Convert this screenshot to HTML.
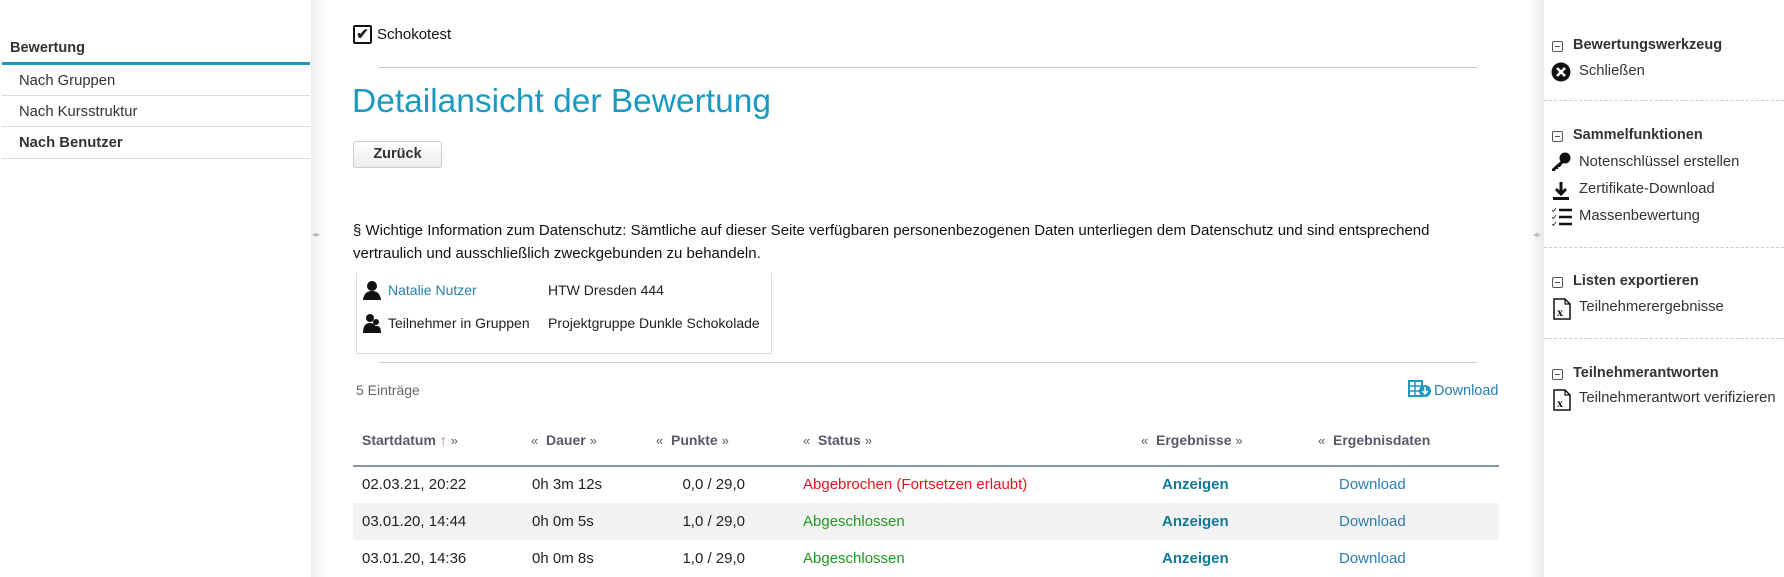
<!DOCTYPE html>
<html><head><meta charset="utf-8"><style>
*{margin:0;padding:0;box-sizing:border-box}
body{width:1784px;height:577px;background:#fff;font-family:"Liberation Sans",Arial,sans-serif;color:#222;position:relative;overflow:hidden;font-size:14px}
.a{position:absolute;white-space:nowrap}
.shl{position:absolute;left:311px;top:0;width:16px;height:577px;background:linear-gradient(to right,#eee,#f7f7f7,#fff)}
.shr{position:absolute;left:1530px;top:0;width:14px;height:577px;background:linear-gradient(to right,#fff,#f3f3f3,#e8e8e8)}
.sep{position:absolute;height:1px;background:#ddd}
.dash{position:absolute;left:1544px;width:240px;border-top:1px dashed #ccc}
.rh{font-weight:bold;color:#333;font-size:14.5px}
.ri{font-size:14.8px;color:#333}
.mini{display:inline-block;width:11px;height:11px;border:1px solid #555;border-radius:2px;position:relative}
.mini:after{content:"";position:absolute;left:2px;right:2px;top:4px;height:1px;background:#555}
.hd{color:#555a66;font-weight:bold;font-size:14px}
.q{color:#555a66;font-weight:normal;font-size:13px}
.t{font-size:15px}
</style></head><body>
<div class="a" style="left:10px;top:40px;font-weight:bold;font-size:14.5px;color:#333">Bewertung</div>
<div class="a" style="left:2px;top:62px;width:308px;height:3px;background:#1a9ac0"></div>
<div class="a" style="left:19px;top:73px;font-size:14.8px;color:#333">Nach Gruppen</div>
<div class="sep" style="left:2px;top:95px;width:308px"></div>
<div class="a" style="left:19px;top:104px;font-size:14.8px;color:#333">Nach Kursstruktur</div>
<div class="sep" style="left:2px;top:126px;width:308px"></div>
<div class="a" style="left:19px;top:135px;font-size:14.8px;font-weight:bold;color:#333">Nach Benutzer</div>
<div class="sep" style="left:2px;top:158px;width:308px"></div>
<div class="shl"></div>
<div class="a" style="left:312px;top:230px;font-size:8px;color:#bbb">◂▸</div>
<div class="shr"></div>
<div class="a" style="left:1533px;top:230px;font-size:8px;color:#bbb">◂▸</div>

<div class="a" style="left:353px;top:25px;width:19px;height:19px;border:2px solid #111;border-radius:2px;font-size:15px;line-height:15px;text-align:center;font-weight:bold">✔</div>
<div class="a" style="left:377px;top:26px;font-size:15px;color:#111">Schokotest</div>
<div class="sep" style="left:379px;top:67px;width:1098px;background:#ccc"></div>
<div class="a" style="left:352px;top:83px;font-size:33.5px;color:#1a9ac0">Detailansicht der Bewertung</div>
<div class="a" style="left:353px;top:141px;width:89px;height:27px;border:1px solid #ccc;border-radius:3px;background:linear-gradient(#fff,#ececec);font-weight:bold;font-size:14.5px;color:#333;text-align:center;line-height:25px">Zurück</div>
<div class="a" style="left:353px;top:219px;font-size:15px;color:#111;line-height:23px">§ Wichtige Information zum Datenschutz: Sämtliche auf dieser Seite verfügbaren personenbezogenen Daten unterliegen dem Datenschutz und sind entsprechend<br>vertraulich und ausschließlich zweckgebunden zu behandeln.</div>
<div class="a" style="left:356px;top:273px;width:416px;height:81px;border:1px solid #ddd;border-top:none"></div>
<svg class="a" style="left:362px;top:280px" width="20" height="20" viewBox="0 0 20 20"><circle cx="10" cy="6" r="5" fill="#111"/><path d="M1 20 Q2 11 10 11 Q18 11 19 20Z" fill="#111"/></svg>
<div class="a" style="left:388px;top:282px;font-size:14px;color:#2a7fb0">Natalie Nutzer</div>
<div class="a" style="left:548px;top:282px;font-size:14px">HTW Dresden 444</div>
<svg class="a" style="left:362px;top:313px" width="20" height="20" viewBox="0 0 20 20"><circle cx="8" cy="5" r="4" fill="#111"/><path d="M1 20 Q1 10 8 10 Q15 10 15 20Z" fill="#111"/><circle cx="14" cy="9" r="3" fill="#111"/><path d="M11 20 Q11 13 15 13 Q19 13 19 20Z" fill="#111"/></svg>
<div class="a" style="left:388px;top:315px;font-size:14px">Teilnehmer in Gruppen</div>
<div class="a" style="left:548px;top:315px;font-size:14px">Projektgruppe Dunkle Schokolade</div>
<div class="sep" style="left:379px;top:362px;width:1098px;background:#ccc"></div>
<div class="a" style="left:356px;top:382px;font-size:14px;color:#666">5 Einträge</div>
<svg class="a" style="left:1408px;top:380px" width="24" height="18" viewBox="0 0 24 18"><rect x="1" y="1" width="13" height="15" fill="none" stroke="#1a9ac0" stroke-width="2"/><path d="M1 6h13M1 11h13M7 1v15" stroke="#1a9ac0" stroke-width="1.5"/><circle cx="17" cy="11" r="6" fill="#1a9ac0"/><path d="M17 7v6M14.5 11l2.5 3 2.5-3" stroke="#fff" stroke-width="1.5" fill="none"/></svg>
<div class="a" style="left:1434px;top:383px;font-size:14.5px;color:#2a7fb0">Download</div>

<div class="a hd" style="left:362px;top:432px">Startdatum <span style="color:#c06080;font-weight:normal">↑</span> <span class="q">»</span></div>
<div class="a hd" style="left:531px;top:432px"><span class="q">«</span>&nbsp; Dauer <span class="q">»</span></div>
<div class="a hd" style="left:656px;top:432px"><span class="q">«</span>&nbsp; Punkte <span class="q">»</span></div>
<div class="a hd" style="left:803px;top:432px"><span class="q">«</span>&nbsp; Status <span class="q">»</span></div>
<div class="a hd" style="left:1141px;top:432px"><span class="q">«</span>&nbsp; Ergebnisse <span class="q">»</span></div>
<div class="a hd" style="left:1318px;top:432px"><span class="q">«</span>&nbsp; Ergebnisdaten</div>
<div class="a" style="left:353px;top:465px;width:1146px;height:2px;background:#8a92a6"></div>
<div class="a" style="left:353px;top:503px;width:1146px;height:37px;background:#f2f2f2"></div>

<div class="a t" style="left:362px;top:476px">02.03.21, 20:22</div>
<div class="a t" style="left:532px;top:476px">0h 3m 12s</div>
<div class="a t" style="left:665px;top:476px;width:80px;text-align:right">0,0 / 29,0</div>
<div class="a t" style="left:803px;top:476px;color:#e8141e">Abgebrochen (Fortsetzen erlaubt)</div>
<div class="a t" style="left:1162px;top:476px;color:#0f7a97;font-weight:bold">Anzeigen</div>
<div class="a t" style="left:1339px;top:476px;color:#2a7fb0">Download</div>

<div class="a t" style="left:362px;top:513px">03.01.20, 14:44</div>
<div class="a t" style="left:532px;top:513px">0h 0m 5s</div>
<div class="a t" style="left:665px;top:513px;width:80px;text-align:right">1,0 / 29,0</div>
<div class="a t" style="left:803px;top:513px;color:#1a9e1a">Abgeschlossen</div>
<div class="a t" style="left:1162px;top:513px;color:#0f7a97;font-weight:bold">Anzeigen</div>
<div class="a t" style="left:1339px;top:513px;color:#2a7fb0">Download</div>

<div class="a t" style="left:362px;top:550px">03.01.20, 14:36</div>
<div class="a t" style="left:532px;top:550px">0h 0m 8s</div>
<div class="a t" style="left:665px;top:550px;width:80px;text-align:right">1,0 / 29,0</div>
<div class="a t" style="left:803px;top:550px;color:#1a9e1a">Abgeschlossen</div>
<div class="a t" style="left:1162px;top:550px;color:#0f7a97;font-weight:bold">Anzeigen</div>
<div class="a t" style="left:1339px;top:550px;color:#2a7fb0">Download</div>

<div class="a" style="left:1552px;top:39px"><span class="mini"></span></div>
<div class="a rh" style="left:1573px;top:37px">Bewertungswerkzeug</div>
<svg class="a" style="left:1551px;top:62px" width="20" height="20" viewBox="0 0 20 20"><circle cx="10" cy="10" r="9.5" fill="#111"/><path d="M6 6l8 8M14 6l-8 8" stroke="#fff" stroke-width="2.6"/></svg>
<div class="a ri" style="left:1579px;top:63px">Schließen</div>
<div class="dash" style="top:100px"></div>
<div class="a" style="left:1552px;top:129px"><span class="mini"></span></div>
<div class="a rh" style="left:1573px;top:127px">Sammelfunktionen</div>
<svg class="a" style="left:1551px;top:152px" width="20" height="20" viewBox="0 0 20 20"><circle cx="14" cy="6" r="5.5" fill="#111"/><path d="M11 8L1 17v2h3l1-2h2v-2h2l3-4z" fill="#111"/></svg>
<div class="a ri" style="left:1579px;top:154px">Notenschlüssel erstellen</div>
<svg class="a" style="left:1552px;top:181px" width="18" height="20" viewBox="0 0 18 20"><path d="M9 1v11M4 8l5 5 5-5" stroke="#111" stroke-width="3" fill="none"/><rect x="1" y="16" width="16" height="3" fill="#111"/></svg>
<div class="a ri" style="left:1579px;top:181px">Zertifikate-Download</div>
<svg class="a" style="left:1552px;top:207px" width="20" height="20" viewBox="0 0 20 20"><path d="M7 3h13M7 10h13M7 17h13" stroke="#111" stroke-width="2.4"/><path d="M0 3l1.5 1.5L4 1M0 10l1.5 1.5L4 8M0 17l1.5 1.5L4 15" stroke="#444" stroke-width="1" fill="none"/></svg>
<div class="a ri" style="left:1579px;top:208px">Massenbewertung</div>
<div class="dash" style="top:247px"></div>
<div class="a" style="left:1552px;top:275px"><span class="mini"></span></div>
<div class="a rh" style="left:1573px;top:273px">Listen exportieren</div>
<svg class="a" style="left:1553px;top:298px" width="18" height="22" viewBox="0 0 18 22"><path d="M1 1h11l5 5v15H1z" fill="none" stroke="#111" stroke-width="1.5"/><path d="M12 1v5h5" fill="none" stroke="#111" stroke-width="1.2"/><text x="4" y="18" font-family="Liberation Serif" font-weight="bold" font-size="12" fill="#111">x</text></svg>
<div class="a ri" style="left:1579px;top:299px">Teilnehmerergebnisse</div>
<div class="dash" style="top:338px"></div>
<div class="a" style="left:1552px;top:367px"><span class="mini"></span></div>
<div class="a rh" style="left:1573px;top:365px">Teilnehmerantworten</div>
<svg class="a" style="left:1553px;top:389px" width="18" height="22" viewBox="0 0 18 22"><path d="M1 1h11l5 5v15H1z" fill="none" stroke="#111" stroke-width="1.5"/><path d="M12 1v5h5" fill="none" stroke="#111" stroke-width="1.2"/><text x="4" y="18" font-family="Liberation Serif" font-weight="bold" font-size="12" fill="#111">x</text></svg>
<div class="a ri" style="left:1579px;top:390px">Teilnehmerantwort verifizieren</div>
</body></html>
